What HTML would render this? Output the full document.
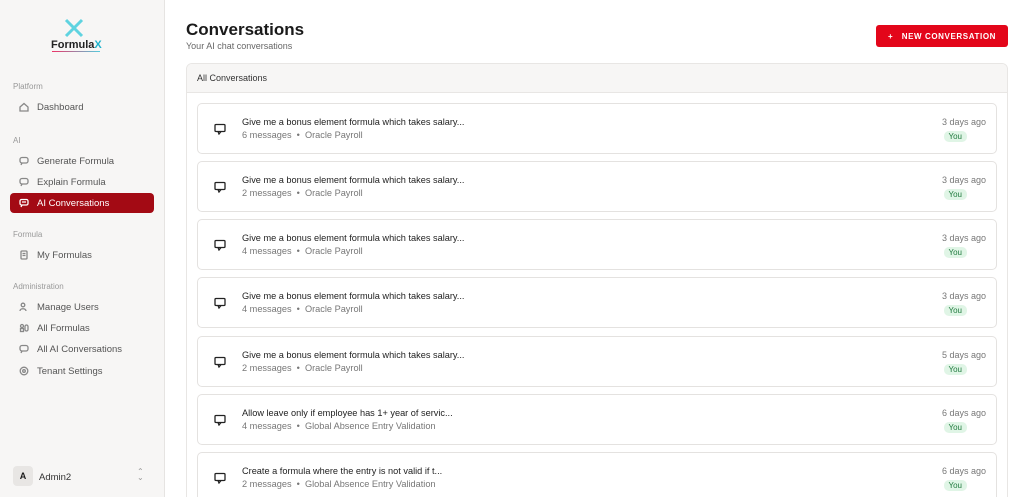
<!DOCTYPE html>
<html style="width:1024px;height:497px;overflow:hidden"><head><style>
*{box-sizing:border-box;margin:0;padding:0}
body{width:1024px;height:497px;overflow:hidden;font-family:"Liberation Sans",sans-serif;background:#fff;position:relative;color:#1a1a1a}
.sb{position:absolute;left:0;top:0;width:165px;height:497px;background:#f7f6f5;border-right:1px solid #e6e4e2}
.sec{position:absolute;left:13px;font-size:8px;color:#999}
.it{position:absolute;left:10px;width:144px;height:20px;font-size:9.5px;color:#555;display:flex;align-items:center;padding-left:9px}
.it svg{width:10px;height:10px;margin-right:8px;fill:none;stroke:#888;stroke-width:1.3}
.it.a{background:#a30a14;color:#fff;border-radius:4px}
.it.a svg{stroke:#fff}
h1{position:absolute;left:186px;top:20px;font-size:17px;font-weight:bold;color:#1a1a1a}
.sub{position:absolute;left:186px;top:41px;font-size:9px;color:#666}
.btn{position:absolute;left:876px;top:25px;width:132px;height:22px;background:#e3061a;border-radius:3px;color:#fff;font-size:8px;font-weight:bold;letter-spacing:.6px;display:flex;align-items:center;justify-content:center}
.card{position:absolute;left:186px;top:63px;width:822px;height:445px;border:1px solid #e8e6e4;border-radius:6px;overflow:hidden}
.ch{height:29px;background:#f7f6f5;border-bottom:1px solid #e8e6e4;font-size:9px;color:#333;padding:9px 10px}
.row{position:absolute;left:10px;width:800px;height:51px;border:1px solid #e4e2e0;border-radius:5px}
.row .ic{position:absolute;left:16px;top:19px}
.t{position:absolute;left:44px;top:13px;font-size:9.2px;color:#222}
.m{position:absolute;left:44px;top:26px;font-size:9.2px;color:#777}
.d{position:absolute;right:10px;top:13px;font-size:9px;color:#777}
.y{position:absolute;right:29px;top:27px;font-size:8px;color:#1f7a3d;background:#e0f5e6;border-radius:5px;padding:1px 5px}
</style></head><body>
<div class="sb">
<svg style="position:absolute;left:64px;top:18px" width="20" height="20" viewBox="0 0 20 20"><path d="M2 2L18 18M18 2L2 18" stroke="#5fd3e0" stroke-width="3"/></svg>
<div style="position:absolute;left:51px;top:39px;font-size:11px;font-weight:bold;color:#222">Formula<span style="color:#1fb3cc">X</span></div>
<div style="position:absolute;left:52px;top:51px;width:48px;height:1px;background:linear-gradient(90deg,#e36,#5cd)"></div>
<div class="sec" style="top:82px">Platform</div>
<div class="it" style="top:97px"><svg viewBox="0 0 10 10"><path d="M1 5L5 1.5L9 5V9H1Z"/></svg>Dashboard</div>
<div class="sec" style="top:136px">AI</div>
<div class="it" style="top:151px"><svg viewBox="0 0 10 10"><rect x="1" y="1.5" width="8" height="5.5" rx="2"/><path d="M3 7L2 9"/></svg>Generate Formula</div>
<div class="it" style="top:172px"><svg viewBox="0 0 10 10"><rect x="1" y="1.5" width="8" height="5.5" rx="2"/><path d="M3 7L2 9"/></svg>Explain Formula</div>
<div class="it a" style="top:193px"><svg viewBox="0 0 10 10"><rect x="1" y="1.5" width="8" height="5.5" rx="1.5"/><path d="M3 7L2 9M3 4H7"/></svg>AI Conversations</div>
<div class="sec" style="top:230px">Formula</div>
<div class="it" style="top:245px"><svg viewBox="0 0 10 10"><rect x="2" y="1" width="6" height="8" rx="1"/><path d="M3.5 3.5H6.5M3.5 5.5H6.5"/></svg>My Formulas</div>
<div class="sec" style="top:282px">Administration</div>
<div class="it" style="top:297px"><svg viewBox="0 0 10 10"><circle cx="4" cy="3" r="1.8"/><path d="M1 9C1 6 7 6 7 9"/></svg>Manage Users</div>
<div class="it" style="top:318px"><svg viewBox="0 0 10 10"><circle cx="3" cy="3" r="1.5"/><rect x="1.5" y="5.5" width="3" height="3"/><rect x="6" y="2" width="3" height="6" rx="1.5"/></svg>All Formulas</div>
<div class="it" style="top:339px"><svg viewBox="0 0 10 10"><rect x="1" y="1.5" width="8" height="5.5" rx="2"/><path d="M3 7L2 9"/></svg>All AI Conversations</div>
<div class="it" style="top:361px"><svg viewBox="0 0 10 10"><circle cx="5" cy="5" r="3.8"/><circle cx="5" cy="5" r="1.3"/></svg>Tenant Settings</div>
<div style="position:absolute;left:13px;top:466px;width:20px;height:20px;background:#e8e6e4;border-radius:4px;font-size:9px;font-weight:bold;display:flex;align-items:center;justify-content:center">A</div>
<div style="position:absolute;left:39px;top:472px;font-size:9.5px;color:#333">Admin2</div>
<div style="position:absolute;left:137px;top:469px;font-size:8px;color:#999;line-height:6px">⌃<br>⌄</div>
</div>
<h1>Conversations</h1>
<div class="sub">Your AI chat conversations</div>
<div class="btn">+&nbsp;&nbsp; NEW CONVERSATION</div>
<div class="card"><div class="ch">All Conversations</div>
<div class="row" style="top:39px"><svg class="ic" width="12" height="12" viewBox="0 0 12 12" fill="none" stroke="#222" stroke-width="1.3"><rect x="1" y="1.5" width="10" height="7" rx="1"/><path d="M4 8.5L5 11L7 8.5"/></svg><div class="t">Give me a bonus element formula which takes salary...</div><div class="m">6 messages &nbsp;•&nbsp; Oracle Payroll</div><div class="d">3 days ago</div><div class="y">You</div></div>
<div class="row" style="top:97px"><svg class="ic" width="12" height="12" viewBox="0 0 12 12" fill="none" stroke="#222" stroke-width="1.3"><rect x="1" y="1.5" width="10" height="7" rx="1"/><path d="M4 8.5L5 11L7 8.5"/></svg><div class="t">Give me a bonus element formula which takes salary...</div><div class="m">2 messages &nbsp;•&nbsp; Oracle Payroll</div><div class="d">3 days ago</div><div class="y">You</div></div>
<div class="row" style="top:155px"><svg class="ic" width="12" height="12" viewBox="0 0 12 12" fill="none" stroke="#222" stroke-width="1.3"><rect x="1" y="1.5" width="10" height="7" rx="1"/><path d="M4 8.5L5 11L7 8.5"/></svg><div class="t">Give me a bonus element formula which takes salary...</div><div class="m">4 messages &nbsp;•&nbsp; Oracle Payroll</div><div class="d">3 days ago</div><div class="y">You</div></div>
<div class="row" style="top:213px"><svg class="ic" width="12" height="12" viewBox="0 0 12 12" fill="none" stroke="#222" stroke-width="1.3"><rect x="1" y="1.5" width="10" height="7" rx="1"/><path d="M4 8.5L5 11L7 8.5"/></svg><div class="t">Give me a bonus element formula which takes salary...</div><div class="m">4 messages &nbsp;•&nbsp; Oracle Payroll</div><div class="d">3 days ago</div><div class="y">You</div></div>
<div class="row" style="top:272px"><svg class="ic" width="12" height="12" viewBox="0 0 12 12" fill="none" stroke="#222" stroke-width="1.3"><rect x="1" y="1.5" width="10" height="7" rx="1"/><path d="M4 8.5L5 11L7 8.5"/></svg><div class="t">Give me a bonus element formula which takes salary...</div><div class="m">2 messages &nbsp;•&nbsp; Oracle Payroll</div><div class="d">5 days ago</div><div class="y">You</div></div>
<div class="row" style="top:330px"><svg class="ic" width="12" height="12" viewBox="0 0 12 12" fill="none" stroke="#222" stroke-width="1.3"><rect x="1" y="1.5" width="10" height="7" rx="1"/><path d="M4 8.5L5 11L7 8.5"/></svg><div class="t">Allow leave only if employee has 1+ year of servic...</div><div class="m">4 messages &nbsp;•&nbsp; Global Absence Entry Validation</div><div class="d">6 days ago</div><div class="y">You</div></div>
<div class="row" style="top:388px"><svg class="ic" width="12" height="12" viewBox="0 0 12 12" fill="none" stroke="#222" stroke-width="1.3"><rect x="1" y="1.5" width="10" height="7" rx="1"/><path d="M4 8.5L5 11L7 8.5"/></svg><div class="t">Create a formula where the entry is not valid if t...</div><div class="m">2 messages &nbsp;•&nbsp; Global Absence Entry Validation</div><div class="d">6 days ago</div><div class="y">You</div></div>
</div>
</body></html>
